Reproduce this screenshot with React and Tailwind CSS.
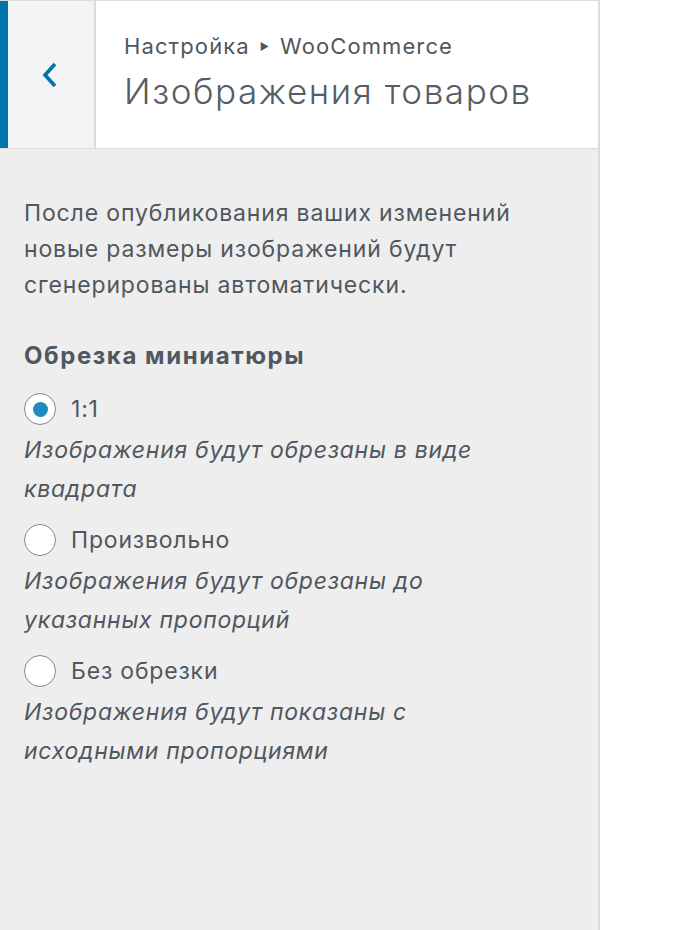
import { useState } from 'react';

const options = [
  { id: 'square', label: '1:1', desc: 'Изображения будут обрезаны в виде квадрата' },
  { id: 'custom', label: 'Произвольно', desc: 'Изображения будут обрезаны до указанных пропорций' },
  { id: 'none', label: 'Без обрезки', desc: 'Изображения будут показаны с исходными пропорциями' },
];

function Radio({ checked }) {
  return (
    <span className="flex h-[32px] w-[32px] shrink-0 items-center justify-center rounded-full border-[1.5px] border-[#7e8993] bg-white">
      {checked && <span className="h-[15px] w-[15px] rounded-full bg-[#1e8cbe]" />}
    </span>
  );
}

export default function App() {
  const [crop, setCrop] = useState('square');

  return (
    <div className="flex min-h-[930px] bg-white font-['Inter',sans-serif] text-[#50575e]">
      <div className="flex w-[600px] flex-col border-r-2 border-[#dcdcde] bg-[#eeeeee]">
        <header className="flex h-[149px] border-y border-[#dcdcde] bg-white">
          <button className="flex w-[96px] items-center justify-center border-r-2 border-[#dcdcde] border-l-[8px] border-l-[#0073aa] bg-[#f3f4f5] pr-[2px] text-[#0073aa]">
            <svg width="18" height="28" viewBox="0 0 18 28" fill="none">
              <path d="M14 3 L4 14 L14 25" stroke="currentColor" strokeWidth="3.6" />
            </svg>
          </button>
          <div className="flex flex-col justify-center pl-[28px] pb-[4px]">
            <div className="flex items-center gap-[10px] text-[22px] leading-[28px] tracking-[0.05em] text-[#50575e]">
              <span>Настройка</span>
              <span className="text-[10px]">▶</span>
              <span>WooCommerce</span>
            </div>
            <h1 className="mt-[9px] text-[35px] font-light leading-[44px] tracking-[0.045em] text-[#555d66]">
              Изображения товаров
            </h1>
          </div>
        </header>

        <div className="px-[24px] pt-[46px]">
          <p className="w-[510px] text-[23px] leading-[36px] tracking-[0.037em]">
            После опубликования ваших изменений новые размеры изображений будут сгенерированы автоматически.
          </p>

          <h2 className="mt-[37px] text-[24px] font-bold leading-[32px] tracking-[0.065em]">Обрезка миниатюры</h2>

          <div className="mt-[19px] flex flex-col gap-[13px]">
            {options.map((o) => (
              <label key={o.id} className="flex cursor-pointer flex-col" onClick={() => setCrop(o.id)}>
                <span className="flex items-center gap-[15px]">
                  <Radio checked={crop === o.id} />
                  <span className="text-[23px] leading-[36px] tracking-[0.035em]">{o.label}</span>
                </span>
                <span className="mt-[4px] w-[510px] text-[23px] italic leading-[39px] tracking-[0.032em]">{o.desc}</span>
              </label>
            ))}
          </div>
        </div>
      </div>
    </div>
  );
}
